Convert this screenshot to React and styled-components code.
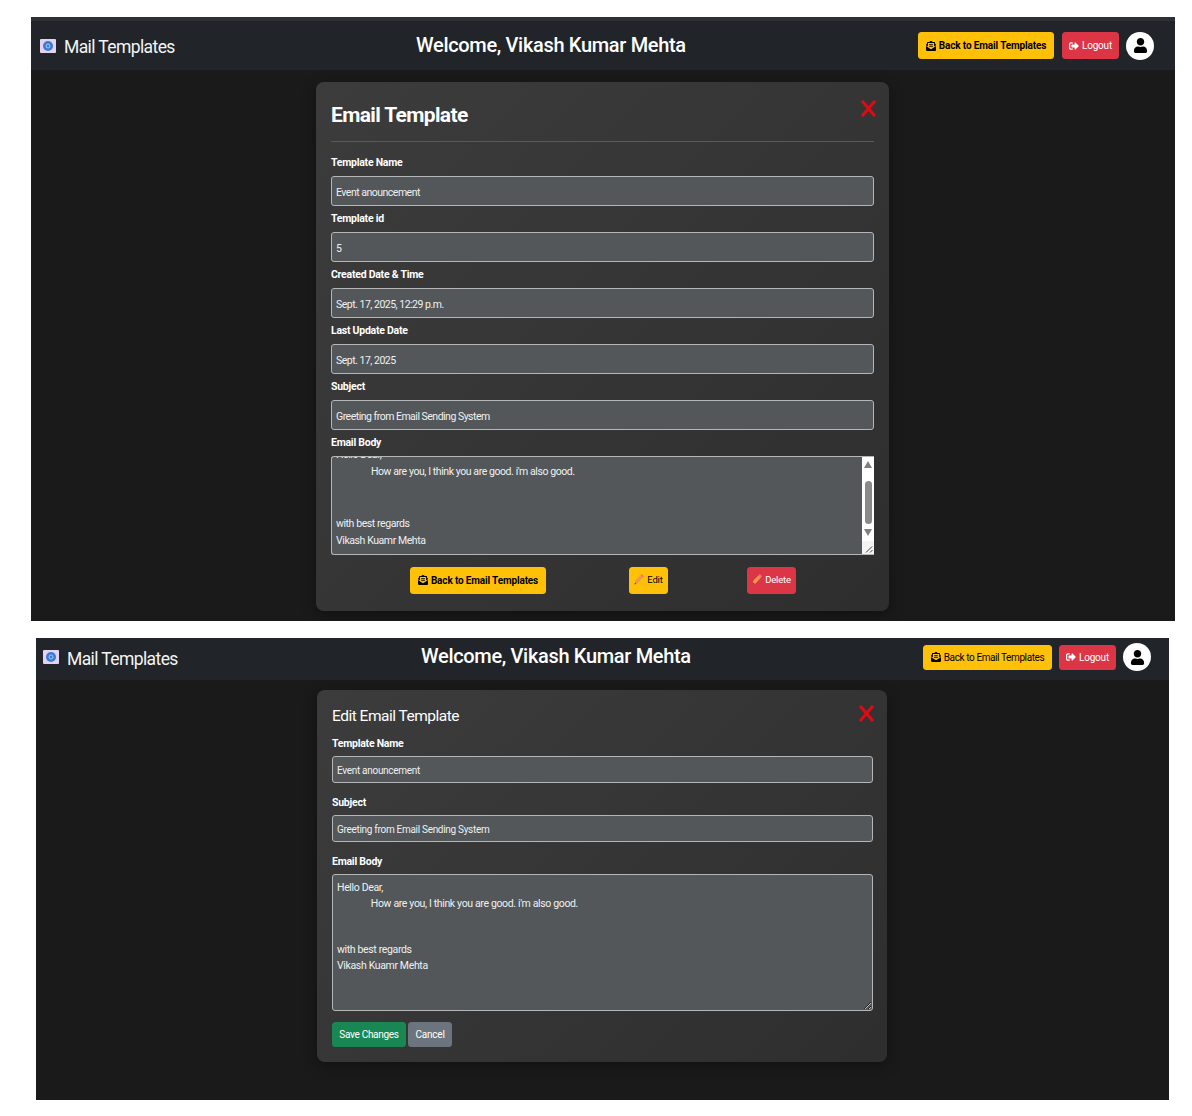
import React from "react";
import styled, { createGlobalStyle } from "styled-components";
import { FaEnvelopeOpenText, FaSignOutAlt, FaUser } from "react-icons/fa";

const GlobalStyle = createGlobalStyle`
  html, body {
    margin: 0;
    padding: 0;
    background: #fff;
  }
  * {
    box-sizing: border-box;
  }
`;

const FONT = `Roboto, "Open Sans", sans-serif`;

const Page = styled.div`
  font-family: ${FONT};
  color: #fff;
  height: 1116px;
  padding-top: 17px;
  display: flex;
  flex-direction: column;
  gap: 17px;
`;

const Shot = styled.section`
  margin-left: ${(p) => p.$left}px;
  width: ${(p) => p.$width}px;
  height: ${(p) => p.$height}px;
  background: #1a1a1a;
  overflow: hidden;
`;

const Navbar = styled.header`
  height: ${(p) => p.$height}px;
  background: #212529;
  border-top: ${(p) => p.$strip}px solid #2d3034;
  display: flex;
  align-items: center;
  justify-content: space-between;
  padding: 0 ${(p) => p.$padRight}px ${(p) => p.$padBottom}px ${(p) => p.$padLeft}px;
`;

const Brand = styled.div`
  display: flex;
  align-items: center;
  gap: 8px;
  font-size: 17.5px;
  letter-spacing: -0.6px;
  color: #f4f4f4;
`;

const BrandName = styled.span`
  padding-top: 3px;
`;

const Welcome = styled.h1`
  margin: 0 0 ${(p) => p.$lift}px ${(p) => p.$shift}px;
  font-size: 20px;
  font-weight: 500;
  letter-spacing: -0.33px;
  white-space: nowrap;
`;

const NavActions = styled.div`
  display: flex;
  align-items: center;
  gap: 7px;
`;

const Btn = styled.button`
  font-family: ${FONT};
  border: 0;
  display: inline-flex;
  align-items: center;
  justify-content: center;
  gap: ${(p) => p.$gap ?? 3}px;
  height: ${(p) => p.$h}px;
  width: ${(p) => p.$w}px;
  margin-right: ${(p) => p.$mr ?? 0}px;
  padding: 0 0 ${(p) => p.$lift ?? 0}px;
  border-radius: 3.5px;
  font-size: ${(p) => p.$size ?? 10}px;
  font-weight: ${(p) => (p.$bold ? 700 : 400)};
  letter-spacing: ${(p) => p.$track ?? -0.2}px;
  white-space: nowrap;
  color: ${(p) => p.$color ?? "#fff"};
  background: ${(p) => p.$bg};
`;

const Avatar = styled.div`
  width: ${(p) => p.$size}px;
  height: ${(p) => p.$size}px;
  border-radius: 50%;
  background: #fff;
  color: #000;
  display: flex;
  align-items: center;
  justify-content: center;
  font-size: 15px;
`;

const Card = styled.main`
  position: relative;
  margin: ${(p) => p.$top}px 0 0 ${(p) => p.$left}px;
  width: ${(p) => p.$width}px;
  height: ${(p) => p.$height}px;
  padding: ${(p) => p.$padTop}px ${(p) => p.$padRight}px 0 15px;
  border-radius: 8px;
  background: linear-gradient(135deg, #3c3c3c 0%, #2e2e2e 100%);
  box-shadow: 0 4px 14px rgba(0, 0, 0, 0.35);
`;

const CloseBtn = styled.span`
  position: absolute;
  top: ${(p) => p.$top}px;
  right: ${(p) => p.$right}px;
  display: flex;
`;

const CardTitle = styled.h2`
  margin: 0;
  font-size: 21px;
  line-height: 28px;
  font-weight: 700;
  letter-spacing: -0.65px;
`;

const Divider = styled.hr`
  margin: 12px 0 14px;
  border: 0;
  border-top: 1px solid #5a5a5a;
`;

const EditTitle = styled.h2`
  margin: 0 0 10px;
  font-size: 15.5px;
  line-height: 22px;
  font-weight: 400;
  letter-spacing: -0.5px;
`;

const Field = styled.label`
  display: block;
  margin-bottom: ${(p) => p.$gap}px;
`;

const Label = styled.span`
  display: block;
  font-size: 10.5px;
  line-height: 14px;
  font-weight: 700;
  letter-spacing: -0.25px;
  margin-bottom: ${(p) => p.$gap}px;
`;

const Input = styled.input`
  display: block;
  width: 100%;
  height: ${(p) => p.$h}px;
  padding: 2px 4px 0;
  font-family: ${FONT};
  font-size: ${(p) => p.$size}px;
  letter-spacing: ${(p) => p.$track}px;
  color: #f0f0f0;
  background: #53575a;
  border: 1px solid #b4b6b8;
  border-radius: 3px;
  outline: none;
`;

const ScrollBody = styled.div`
  height: 99px;
  display: flex;
  background: #53575a;
  border: 1px solid #b4b6b8;
  border-right: 0;
  border-radius: 3px 0 0 3px;
  overflow: hidden;
`;

const BodyText = styled.div`
  flex: 1;
  margin-top: -11px;
  padding-left: 4px;
  font-size: 10.5px;
  line-height: 17.2px;
  letter-spacing: -0.42px;
  white-space: pre-wrap;
  color: #f0f0f0;
`;

const ScrollTrack = styled.div`
  position: relative;
  width: 12px;
  flex: none;
  background: #fff;
`;

const ScrollThumb = styled.div`
  position: absolute;
  left: 3px;
  top: 24px;
  width: 7px;
  height: 43px;
  border-radius: 4px;
  background: #8a8a8a;
`;

const Arrow = styled.div`
  position: absolute;
  left: 2px;
  ${(p) => (p.$up ? "top: 4px;" : "bottom: 18px;")}
  width: 0;
  height: 0;
  border-left: 4.5px solid transparent;
  border-right: 4.5px solid transparent;
  ${(p) => (p.$up ? "border-bottom" : "border-top")}: 7px solid #7f7f7f;
`;

const Grip = styled.svg`
  position: absolute;
  right: 0;
  bottom: 0;
  background: #f3f3f3;
`;

const Textarea = styled.textarea`
  display: block;
  width: 100%;
  height: 137px;
  padding: 5px 4px;
  font-family: ${FONT};
  font-size: 10.5px;
  line-height: 15.6px;
  letter-spacing: -0.35px;
  color: #f0f0f0;
  background: #53575a;
  border: 1px solid #b4b6b8;
  border-radius: 3px;
  outline: none;
`;

const ActionRow = styled.div`
  display: grid;
  grid-template-columns: 219px 118px auto;
  align-items: start;
  margin-top: 12px;
  padding-left: 79px;
`;

const SaveRow = styled.div`
  display: flex;
  gap: 2px;
  margin-top: 11px;
`;

const Logo = () => (
  <svg width="16" height="14" viewBox="0 0 16 14">
    <rect x="0" y="0" width="16" height="14" rx="1" fill="#e3d3f0" />
    <circle cx="8" cy="7" r="5" fill="#3a7bd5" />
    <circle cx="8" cy="7" r="2" fill="none" stroke="#a9c8f0" strokeWidth="1" />
  </svg>
);

const RedCross = () => (
  <svg width="15" height="17" viewBox="0 0 15 17">
    <path d="M2 2 L13 15 M13 2 L2 15" stroke="#e00b12" strokeWidth="3" strokeLinecap="square" />
  </svg>
);

const Pencil = () => (
  <svg width="10" height="12" viewBox="0 0 10 12">
    <path d="M.6 11.4 L1.2 7.8 L6.6 2.2 L9 4.6 L3.8 10.2 Z" fill="#f2964f" />
    <path d="M.6 11.4 L1 9.4 L2.4 10.8 Z" fill="#5a4a3a" />
    <path d="M6.6 2.2 L7.8 1 L10 3.4 L9 4.6 Z" fill="#f0707c" />
  </svg>
);

const NavBar = ({ height, strip, padLeft, padRight, padBottom, shift, lift, backW, backH, backGap, avatar, backBold, backTrack }) => (
  <Navbar $height={height} $strip={strip} $padLeft={padLeft} $padRight={padRight} $padBottom={padBottom}>
    <Brand>
      <Logo />
      <BrandName>Mail Templates</BrandName>
    </Brand>
    <Welcome $shift={shift} $lift={lift}>Welcome, Vikash Kumar Mehta</Welcome>
    <NavActions>
      <Btn $w={backW} $h={backH} $mr={backGap} $bg="#ffc107" $color="#000" $bold={backBold} $track={backTrack}>
        <FaEnvelopeOpenText size={10} />
        Back to Email Templates
      </Btn>
      <Btn $w={57} $h={backH} $bg="#dc3545">
        <FaSignOutAlt size={10} />
        Logout
      </Btn>
      <Avatar $size={avatar}>
        <FaUser />
      </Avatar>
    </NavActions>
  </Navbar>
);

const viewFields = [
  ["Template Name", "Event anouncement"],
  ["Template id", "5"],
  ["Created Date & Time", "Sept. 17, 2025, 12:29 p.m."],
  ["Last Update Date", "Sept. 17, 2025"],
  ["Subject", "Greeting from Email Sending System"],
];

const bodyWithIndent = (spaces) => `Hello Dear,
${" ".repeat(spaces)}How are you, I think you are good. i'm also good.


with best regards
Vikash Kuamr Mehta`;

const ViewScreen = () => (
  <Shot $left={31} $width={1144} $height={604}>
    <NavBar height={53} strip={4} padLeft={9} padRight={21} padBottom={0} shift={9} lift={2} backW={136} backH={27} backGap={1} avatar={28} backBold backTrack={-0.13} />
    <Card $top={12} $left={285} $width={573} $height={529} $padTop={19} $padRight={15}>
      <CloseBtn $top={18} $right={13}>
        <RedCross />
      </CloseBtn>
      <CardTitle>Email Template</CardTitle>
      <Divider />
      {viewFields.map(([label, value]) => (
        <Field key={label} $gap={6}>
          <Label $gap={6}>{label}</Label>
          <Input $h={30} $size={10.5} $track={-0.5} readOnly value={value} />
        </Field>
      ))}
      <Label $gap={6}>Email Body</Label>
      <ScrollBody>
        <BodyText>{bodyWithIndent(16)}</BodyText>
        <ScrollTrack>
          <Arrow $up />
          <ScrollThumb />
          <Arrow />
          <Grip width="12" height="13" viewBox="0 0 12 13">
            <path d="M4 11.5 L10 5.5 M8 11.5 L10.5 9" stroke="#444" strokeWidth="1" />
          </Grip>
        </ScrollTrack>
      </ScrollBody>
      <ActionRow>
        <Btn $w={136} $h={27} $bg="#ffc107" $color="#000" $bold $track={-0.15} $lift={1}>
          <FaEnvelopeOpenText size={10} />
          Back to Email Templates
        </Btn>
        <Btn $w={39} $h={27} $bg="#ffc107" $color="#000" $size={9.5} $lift={3}>
          <Pencil />
          Edit
        </Btn>
        <Btn $w={49} $h={27} $bg="#dc3545" $size={9.5} $lift={3}>
          <Pencil />
          Delete
        </Btn>
      </ActionRow>
    </Card>
  </Shot>
);

const EditScreen = () => (
  <Shot $left={36} $width={1133} $height={462}>
    <NavBar height={42} strip={0} padLeft={7} padRight={18} padBottom={4} shift={11} lift={3} backW={129} backH={25} backGap={0} avatar={28} backTrack={-0.4} />
    <Card $top={10} $left={281} $width={570} $height={372} $padTop={15} $padRight={14}>
      <CloseBtn $top={15} $right={13}>
        <RedCross />
      </CloseBtn>
      <EditTitle>Edit Email Template</EditTitle>
      <Field $gap={13}>
        <Label $gap={5}>Template Name</Label>
        <Input $h={27} $size={10} $track={-0.3} readOnly value="Event anouncement" />
      </Field>
      <Field $gap={13}>
        <Label $gap={5}>Subject</Label>
        <Input $h={27} $size={10} $track={-0.3} readOnly value="Greeting from Email Sending System" />
      </Field>
      <Label $gap={5}>Email Body</Label>
      <Textarea readOnly value={bodyWithIndent(15)} />
      <SaveRow>
        <Btn $w={74} $h={25} $bg="#198754" $track={-0.3}>Save Changes</Btn>
        <Btn $w={44} $h={25} $bg="#6c757d">Cancel</Btn>
      </SaveRow>
    </Card>
  </Shot>
);

export default function App() {
  return (
    <>
      <GlobalStyle />
      <Page>
        <ViewScreen />
        <EditScreen />
      </Page>
    </>
  );
}
